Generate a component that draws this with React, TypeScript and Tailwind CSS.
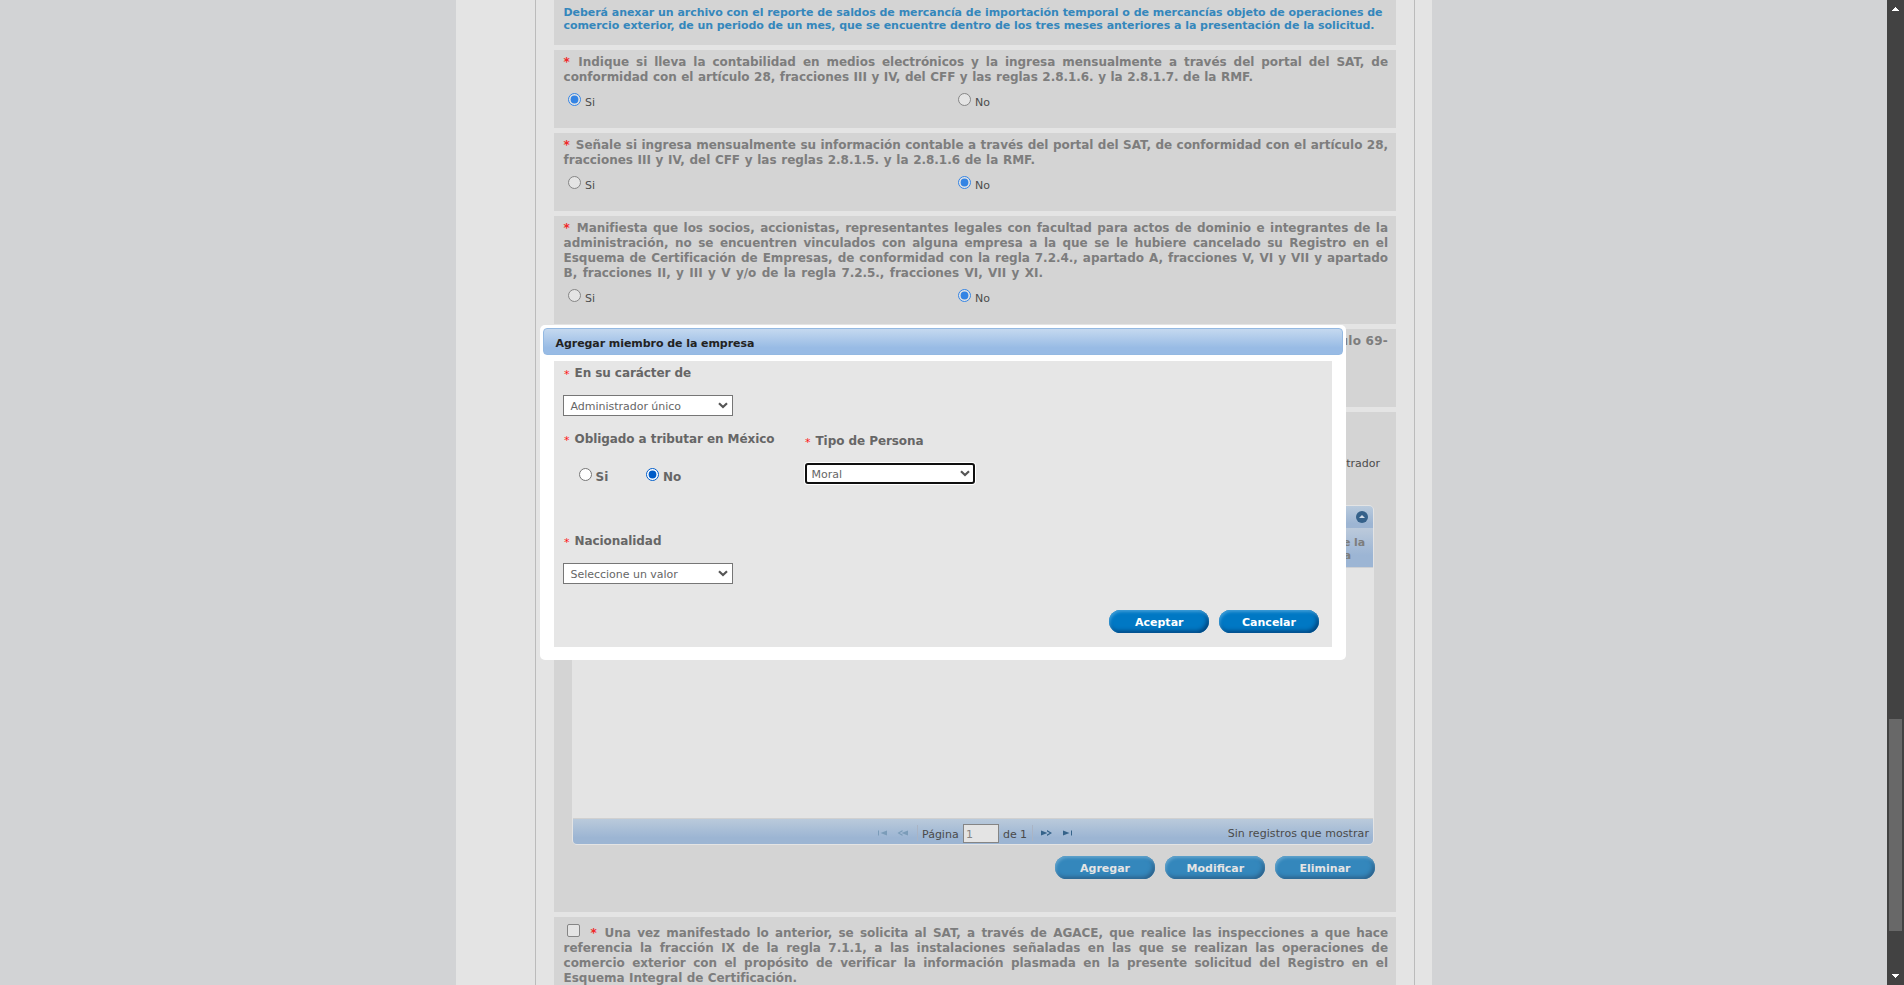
import React from 'react';

const Radio = ({ on = false, vivid = false }: { on?: boolean; vivid?: boolean }) => {
  const blue = vivid ? '#005cc8' : '#3484e4';
  const fill = vivid ? '#ffffff' : '#e4e4e4';
  return (
    <svg width="13" height="13" viewBox="0 0 13 13" className="block shrink-0">
      <circle cx="6.5" cy="6.5" r="6" fill={fill} stroke={on ? blue : vivid ? '#767676' : '#858585'} />
      {on && <circle cx="6.5" cy="6.5" r="3.9" fill={blue} />}
    </svg>
  );
};

const Line = ({ children, w = 'w-[825px]' }: { children: React.ReactNode; w?: string }) => (
  <div className={`${w} h-[15px] whitespace-nowrap pl-[0.6px] text-justify tracking-[-0.04px] [text-align-last:justify]`}>{children}</div>
);

const Star = () => <span className="mr-[1.5px] text-[#f02828]">*</span>;

const Panel = ({ h, children }: { h: string; children?: React.ReactNode }) => (
  <section className={`${h} ml-[18px] mb-[5px] w-[842px] shrink-0 bg-[#d4d4d4] pl-[9px] pt-[5px] text-[12px] font-bold leading-[15px] text-[#7d7d7d]`}>
    {children}
  </section>
);

const YesNo = ({ yes = false }: { yes?: boolean }) => (
  <div className="mt-[8px] flex pl-[5px] text-[11px] font-normal leading-[15px] text-[#4c4c4c]">
    <div className="flex w-[390px] gap-1">
      <Radio on={yes} />
      <span className="pt-[2px] tracking-[-0.1px]">Si</span>
    </div>
    <div className="flex gap-1">
      <Radio on={!yes} />
      <span className="pt-[2px] tracking-[-0.1px]">No</span>
    </div>
  </div>
);

const Button = ({ label, w, dim = false }: { label: string; w: string; dim?: boolean }) => (
  <button
    className={`flex h-[23px] w-[100px] items-center justify-center rounded-[12px] pt-[1px] text-[11px] font-bold leading-[13px] ${
      dim
        ? 'bg-[#3487bc] text-[#e4e4e4] shadow-[inset_1px_2px_3px_#62a4cd,inset_-2px_-2px_4px_#2c5f88]'
        : 'bg-[#0078c4] text-white shadow-[inset_1px_2px_3px_#3c9dd8,inset_-2px_-2px_4px_#00427a]'
    }`}
  >
    <span className={`${w} whitespace-nowrap text-center`}>{label}</span>
  </button>
);

const Label = ({ children }: { children: string }) => (
  <div className="flex h-[15px] whitespace-nowrap text-[12px] font-bold leading-[15px] text-[#666]">
    <span className="w-[11.5px] pl-[1px] pt-[2px] text-[11px] font-normal text-[#ff1414]">*</span>
    <span className="pt-[1px] tracking-[-0.07px]">{children}</span>
  </div>
);

const Select = ({ value, focused = false }: { value: string; focused?: boolean }) => (
  <div
    className={`flex h-[21px] w-[170px] items-center justify-between bg-white text-[11px] leading-[15px] text-[#666] ${
      focused
        ? 'rounded-[3px] border-2 border-[#101010] pl-[4.5px] pr-[3px] shadow-[0_0_0_1px_#fff]'
        : 'border border-[#767676] pl-[6.5px] pr-1'
    }`}
  >
    <span className="pt-[1px] tracking-[-0.02px]">{value}</span>
    <svg width="10" height="7" viewBox="0 0 10 7" className="block">
      <path d="M1 1.2 5 5 9 1.2" fill="none" stroke="#555" strokeWidth="2.2" />
    </svg>
  </div>
);

const PagerIcon = ({ d, bright = false }: { d: string; bright?: boolean }) => (
  <svg width="12" height="6" viewBox="0 0 12 6" className="mt-[3px] block">
    <path d={d} fill={bright ? '#35638a' : '#7b9cb9'} />
  </svg>
);

const Dialog = () => (
  <div className="absolute left-[540px] top-[325px] h-[335px] w-[806px] rounded-[5px] bg-white p-[3px]">
    <div className="h-[27px] rounded-[4px] border border-[#94b9e2] bg-linear-to-b from-[#c5d9ef] to-[#98bbe5] to-75% pl-[11.5px] pt-[7px] text-[11px] font-bold leading-[15px] text-[#222]">
      <span className="tracking-[-0.06px]">Agregar miembro de la empresa</span>
    </div>
    <div className="ml-[11px] mt-[6px] h-[286px] w-[778px] bg-[#e6e6e6] pl-[9px] pt-1">
      <Label>En su carácter de</Label>
      <div className="mt-[15px]">
        <Select value="Administrador único" />
      </div>
      <div className="mt-[15px] flex">
        <div className="w-[242px]">
          <Label>Obligado a tributar en México</Label>
          <div className="mt-[22px] flex pl-4 text-[12px] font-bold leading-[15px] text-[#666]">
            <div className="flex w-[67px] gap-[3.5px]">
              <Radio vivid />
              <span className="pt-[2px]">Si</span>
            </div>
            <div className="flex gap-1">
              <Radio vivid on />
              <span className="pt-[2px]">No</span>
            </div>
          </div>
        </div>
        <div className="-ml-[1px] pt-[2px]">
          <Label>Tipo de Persona</Label>
          <div className="ml-[1px] mt-[15px]">
            <Select value="Moral" focused />
          </div>
        </div>
      </div>
      <div className="mt-[48px]">
        <Label>Nacionalidad</Label>
        <div className="mt-[15px]">
          <Select value="Seleccione un valor" />
        </div>
      </div>
      <div className="mt-[26px] flex justify-end gap-[10px] pr-[13px]">
        <Button label="Aceptar" w="w-[48px]" />
        <Button label="Cancelar" w="w-[54px]" />
      </div>
    </div>
  </div>
);

const MembersGrid = () => (
  <div className="ml-[9px] flex h-[340px] w-[802px] flex-col overflow-hidden rounded-[5px] border border-[#e4e4e4] bg-[#e4e4e4]">
    <div className="flex h-[22px] items-center justify-end bg-linear-to-b from-[#bacbdd] to-[#9db5d3] to-80% pr-[5px]">
      <svg width="12" height="12" viewBox="0 0 12 12">
        <circle cx="6" cy="6" r="6" fill="#35618a" />
        <path d="M3 7 6 4 9 7Z" fill="#d2dce8" />
      </svg>
    </div>
    <div className="flex h-[39px] justify-end bg-linear-to-b from-[#bccadb] to-[#9cb5d4] to-70% pr-[8px] pt-[8px] text-[11px] leading-[13px]">
      <div className="w-[110px] whitespace-nowrap text-right tracking-[-0.1px]">
        Nombre de la
        <div className="pr-[14px]">empresa</div>
      </div>
    </div>
    <div className="flex-1 border-t border-[#cdd0d4]" />
    <div className="grid h-[26px] grid-cols-[335px_1fr_auto] border-t border-[#d0d0d0] bg-linear-to-b from-[#bacadb] to-[#9cb5d3] to-75% pr-1 text-[11px] font-normal leading-[15px] text-[#4a4a4a]">
      <div className="flex items-center justify-end gap-[7px]">
        <PagerIcon d="M1 0.5h1v5h-1zM10 0.5v5L3.5 3z" />
        <PagerIcon d="M12 0.5v5L5.5 3zM6.5 0 1.5 3 6.5 6V4.6L3.5 3 6.5 1.4z" />
      </div>
      <div className="flex">
        <div className="ml-[9px] mr-[4px] mt-[6px] h-[16px] w-px bg-[#aab4c4]" />
        <span className="mt-[8px] w-[37px]">Página</span>
        <div className="ml-[4px] mt-[5px] h-[19px] w-[36px] border border-[#858585] bg-[#e4e4e4] pl-[2px] pt-[2px] text-[#858585]">1</div>
        <span className="ml-[4px] mt-[8px] w-[24px] whitespace-nowrap tracking-[-0.1px]">de 1</span>
        <div className="ml-[5px] mr-[8px] mt-[6px] h-[16px] w-px bg-[#aab4c4]" />
        <div className="flex items-center gap-[10px]">
          <PagerIcon bright d="M0 0.5v5L6.5 3zM6 0 11 3 6 6V4.6L8.7 3 6 1.4z" />
          <PagerIcon bright d="M0 0.5v5L6.5 3zM8 0.5h1v5h-1z" />
        </div>
      </div>
      <span className="mt-[7px] whitespace-nowrap tracking-[0.08px]">Sin registros que mostrar</span>
    </div>
  </div>
);

export default function App() {
  return (
    <div className="relative flex h-[985px] w-[1904px] justify-between overflow-hidden bg-[#d2d3d5] font-['DejaVu_Sans',Verdana,sans-serif]">
      <main className="ml-[456px] w-[976px] bg-[#e4e4e4] pl-[79px]">
        <div className="flex h-[985px] w-[880px] flex-col overflow-hidden border-x border-[#bbb]">
          <Panel h="h-[45px]">
            <div className="mt-px pl-[0.5px] text-justify text-[11px] leading-[13px] tracking-[-0.06px] text-[#3487bc]">
              <div className="h-[13px] w-[819px] whitespace-nowrap [text-align-last:justify]">
                Deberá anexar un archivo con el reporte de saldos de mercancía de importación temporal o de mercancías objeto de operaciones de
              </div>
              <div className="h-[13px] w-[811px] whitespace-nowrap [text-align-last:justify]">
                comercio exterior, de un periodo de un mes, que se encuentre dentro de los tres meses anteriores a la presentación de la solicitud.
              </div>
            </div>
          </Panel>
          <Panel h="h-[78px]">
            <Line><Star /> Indique si lleva la contabilidad en medios electrónicos y la ingresa mensualmente a través del portal del SAT, de</Line>
            <Line w="w-[690px]">conformidad con el artículo 28, fracciones III y IV, del CFF y las reglas 2.8.1.6. y la 2.8.1.7. de la RMF.</Line>
            <YesNo yes />
          </Panel>
          <Panel h="h-[78px]">
            <Line><Star /> Señale si ingresa mensualmente su información contable a través del portal del SAT, de conformidad con el artículo 28,</Line>
            <Line w="w-[472px]">fracciones III y IV, del CFF y las reglas 2.8.1.5. y la 2.8.1.6 de la RMF.</Line>
            <YesNo />
          </Panel>
          <Panel h="h-[108px]">
            <Line><Star /> Manifiesta que los socios, accionistas, representantes legales con facultad para actos de dominio e integrantes de la</Line>
            <Line>administración, no se encuentren vinculados con alguna empresa a la que se le hubiere cancelado su Registro en el</Line>
            <Line>Esquema de Certificación de Empresas, de conformidad con la regla 7.2.4., apartado A, fracciones V, VI y VII y apartado</Line>
            <Line w="w-[480px]">B, fracciones II, y III y V y/o de la regla 7.2.5., fracciones VI, VII y XI.</Line>
            <YesNo />
          </Panel>
          <Panel h="h-[78px]">
            <div className="w-[825px] text-right tracking-[0.25px]">artículo 69-</div>
          </Panel>
          <Panel h="h-[500px]">
            <div className="mt-[39px] h-[49px] w-[817px] text-right text-[11px] font-normal text-[#4c4c4c]">Administrador</div>
            <MembersGrid />
            <div className="mt-[11px] flex justify-end gap-[10px] pr-[21px]">
              <Button dim label="Agregar" w="w-[50px]" />
              <Button dim label="Modificar" w="w-[57px]" />
              <Button dim label="Eliminar" w="w-[51px]" />
            </div>
          </Panel>
          <Panel h="h-[120px]">
            <div className="flex gap-[10px]">
              <div className="ml-1 mt-[2px] size-[13px] shrink-0 rounded-[2px] border border-[#858585] bg-[#e4e4e4]" />
              <div className="pt-[4px]">
                <Line w="w-[798px]"><Star /> Una vez manifestado lo anterior, se solicita al SAT, a través de AGACE, que realice las inspecciones a que hace</Line>
              </div>
            </div>
            <Line>referencia la fracción IX de la regla 7.1.1, a las instalaciones señaladas en las que se realizan las operaciones de</Line>
            <Line>comercio exterior con el propósito de verificar la información plasmada en la presente solicitud del Registro en el</Line>
            <Line w="w-[234px]">Esquema Integral de Certificación.</Line>
          </Panel>
        </div>
      </main>
      <aside className="flex w-[17px] flex-col items-center bg-[#424242]">
        <svg width="7" height="4" viewBox="0 0 7 4" className="mt-[7px] block">
          <path d="M3 0h1v1h1v1h1v1h1v1H0V3h1V2h1V1h1z" fill="#fff" />
        </svg>
        <div className="mt-[708px] h-[212px] w-[13px] bg-[#686868]" />
        <svg width="7" height="4" viewBox="0 0 7 4" className="mt-[43px] block">
          <path d="M0 0h7v1H6v1H5v1H4v1H3V3H2V2H1V1H0z" fill="#fff" />
        </svg>
      </aside>
      <Dialog />
    </div>
  );
}
